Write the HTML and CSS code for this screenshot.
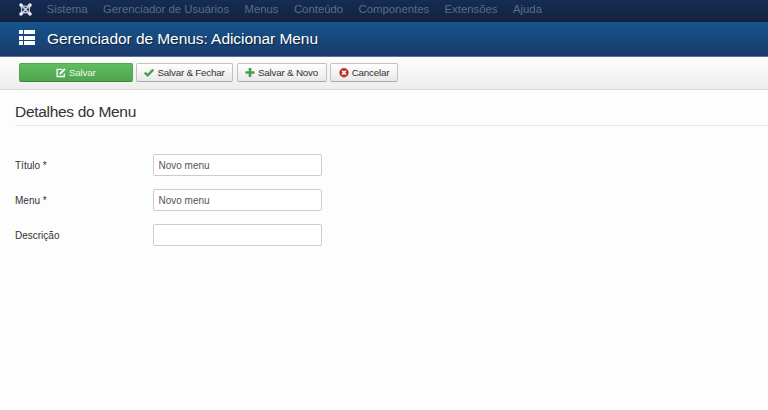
FILE: index.html
```html
<!DOCTYPE html>
<html lang="pt-BR">
<head>
<meta charset="utf-8">
<title>Gerenciador de Menus: Adicionar Menu</title>
<link rel="stylesheet" href="styles.css">
</head>
<body>
<nav class="navbar">
  <svg class="logo" viewBox="0 0 13 13" width="13" height="13">
    <g fill="none" stroke="#ccd3de" stroke-width="1.7">
      <path d="M2 2l9 9M11 2l-9 9"/>
      <path d="M2 2.5Q3.6 6.5 2 10.5M11 2.5Q9.4 6.5 11 10.5M2.5 2Q6.5 4.6 10.5 2M2.5 11Q6.5 8.4 10.5 11" stroke-width="1.3"/>
    </g>
    <g fill="#e8ebf0"><circle cx="2" cy="2" r="1.8"/><circle cx="11" cy="2" r="1.8"/><circle cx="2" cy="11" r="1.8"/><circle cx="11" cy="11" r="1.8"/></g>
  </svg>
  <a>Sistema</a><a>Gerenciador de Usuários</a><a>Menus</a><a>Conteúdo</a><a>Componentes</a><a>Extensões</a><a>Ajuda</a>
</nav>
<header class="header">
  <svg class="list-icon" viewBox="0 0 16 16" width="16" height="16" fill="#fff">
    <path d="M0 0h4v4H0zM5 0h11v4H5zM0 6h4v4H0zM5 6h11v4H5zM0 11h4v4H0zM5 11h11v4H5z"/>
  </svg>
  <h1>Gerenciador de Menus: Adicionar Menu</h1>
</header>
<div class="toolbar">
  <button class="btn btn-save"><svg viewBox="0 0 10 10" width="10" height="10" fill="none" stroke="#fff"><path d="M6 1.3H1.1v7.2h7.2V5.6" stroke-width="1.3"/><path d="M3.8 6L9 .9" stroke-width="1.9"/></svg><span>Salvar</span></button>
  <button class="btn btn-close"><svg viewBox="0 0 10 10" width="10" height="10" fill="none" stroke="#45a049"><path d="M.8 4.5L3.7 7.3L9.2 1.5" stroke-width="2.4"/></svg><span>Salvar &amp; Fechar</span></button>
  <button class="btn btn-new"><svg viewBox="0 0 10 10" width="10" height="10" fill="none" stroke="#45a049"><path d="M5 0v9M.5 4.5h9" stroke-width="2.6"/></svg><span>Salvar &amp; Novo</span></button>
  <button class="btn btn-cancel"><svg viewBox="0 0 10 10" width="10" height="10"><circle cx="5" cy="4.7" r="4.7" fill="#c0352f"/><path d="M3.2 2.9l3.6 3.6M6.8 2.9L3.2 6.5" stroke="#fff" stroke-width="1.5"/></svg><span>Cancelar</span></button>
</div>
<main class="content">
  <h2>Detalhes do Menu</h2>
  <form class="fields">
    <label for="title">Título *</label><input id="title" type="text" value="Novo menu">
    <label for="menu">Menu *</label><input id="menu" type="text" value="Novo menu">
    <label for="desc">Descrição</label><input id="desc" type="text">
  </form>
</main>
</body>
</html>
```
FILE: styles.css
```css
* { box-sizing: border-box; }
body {
  margin: 0;
  min-height: 410px;
  background: #fdfdfd;
  color: #333;
  font-family: "Liberation Sans", Arial, sans-serif;
  font-size: 10px;
  overflow: hidden;
}
.navbar {
  display: flex;
  align-items: center;
  gap: 15.4px;
  height: 22px;
  padding: 0 19px 4px;
  background: linear-gradient(#152c54, #13223f);
  color: #5d6b84;
  font-size: 11.35px;
  white-space: nowrap;
}
.logo { flex: none; margin-right: -.8px; }
.header {
  display: flex;
  align-items: center;
  gap: 12px;
  height: 35px;
  padding: 0 19px 2px;
  background: linear-gradient(#15558c, #1b3a6c);
  border-bottom: 1px solid #5a719b;
}
.list-icon { flex: none; margin-top: -1px; }
.header h1 {
  margin: 2px 0 0;
  color: #fff;
  font-size: 15.5px;
  font-weight: 400;
  letter-spacing: -.06px;
  line-height: 20px;
  text-shadow: 1px 1px 1px rgba(0, 0, 0, .5);
}
.toolbar {
  display: flex;
  gap: 3.5px;
  height: 33px;
  padding: 6px 19px 0;
  background: linear-gradient(#fdfdfd, #ededed);
  border-bottom: 1px solid #d6d6d6;
}
.btn {
  display: flex;
  align-items: center;
  justify-content: center;
  gap: 3px;
  height: 19px;
  padding: 0;
  border: 1px solid #c2c2c2;
  border-bottom-color: #aaa;
  border-radius: 2px;
  background: linear-gradient(#fff, #e8e8e8);
  color: #333;
  font: 9.8px "Liberation Sans", Arial, sans-serif;
  letter-spacing: -.2px;
  white-space: nowrap;
}
.btn svg { flex: none; }
.btn-save {
  width: 113.5px;
  border-color: #4fa64f #4fa64f #3c8a3c;
  background: linear-gradient(#5fbd5f, #50a550);
  color: #e9f6e9;
}
.btn-close { width: 97px; }
.btn-new { width: 90px; }
.btn-cancel { width: 68px; }
.content { padding: 13px 0 0 15px; }
.content h2 {
  height: 23px;
  margin: 0 0 28px;
  border-bottom: 1px solid #e8e8e8;
  font-size: 15.5px;
  font-weight: 400;
  letter-spacing: -.3px;
  line-height: 18px;
}
.fields {
  display: grid;
  grid-template-columns: 138px 169px;
  row-gap: 13px;
  align-items: center;
  font-size: 10px;
}
.fields input {
  width: 169px;
  height: 22px;
  margin: 0;
  padding: 0 4.5px;
  border: 1px solid #ccc;
  border-radius: 2px;
  background: #fff;
  color: #555;
  font: 10px "Liberation Sans", Arial, sans-serif;
}
```
